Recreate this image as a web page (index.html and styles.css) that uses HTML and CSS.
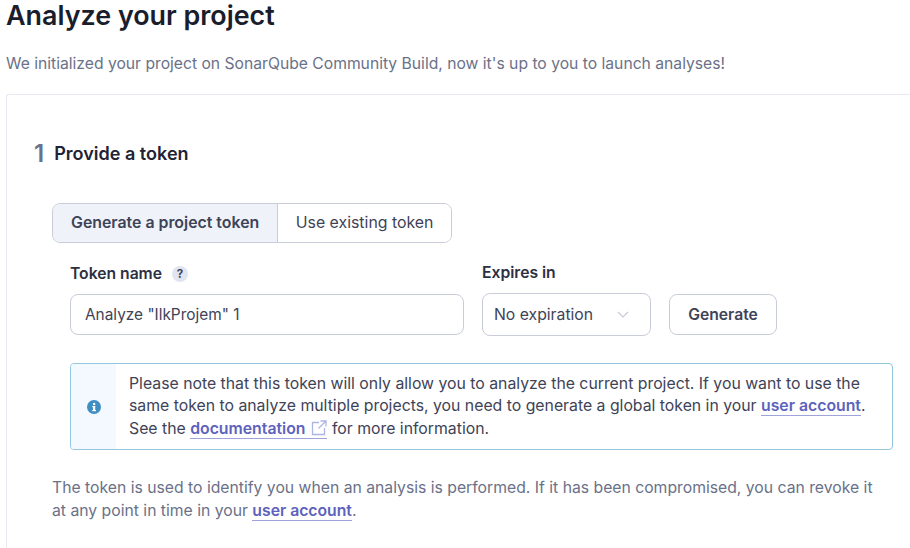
FILE: index.html
```html
<!DOCTYPE html>
<html lang="en">
<head>
<meta charset="utf-8">
<title>Analyze your project</title>
<link rel="stylesheet" href="styles.css">
</head>
<body>
<main class="page">
  <h1 class="title">Analyze your project</h1>
  <p class="intro">We initialized your project on SonarQube Community Build, now it's up to you to launch analyses!</p>
  <section class="card">
    <h2 class="step"><span class="step-num">1</span><span>Provide a token</span></h2>
    <div class="body">
      <div class="toggle">
        <button class="toggle-btn active">Generate a project token</button>
        <button class="toggle-btn">Use existing token</button>
      </div>
      <form class="form">
        <div class="field">
          <label class="label">Token name <span class="help">?</span></label>
          <div class="input">Analyze "IlkProjem" 1</div>
        </div>
        <div class="field">
          <label class="label label-exp">Expires in</label>
          <div class="select">
            <span>No expiration</span>
            <svg class="chev" width="12" height="7" viewBox="0 0 12 7"><path d="M1 1l5 5 5-5" fill="none" stroke="#c5cad6" stroke-width="1.2"/></svg>
          </div>
        </div>
        <button class="generate" type="button">Generate</button>
      </form>
      <div class="note">
        <div class="note-icon">
          <svg width="14" height="14" viewBox="0 0 14 14"><circle cx="7" cy="7" r="7" fill="#3f8fc4"/><rect x="6" y="6" width="2.2" height="5" fill="#fff"/><rect x="5.2" y="6" width="3" height="1.2" fill="#fff"/><rect x="5.2" y="10" width="3.8" height="1.2" fill="#fff"/><circle cx="7.1" cy="3.9" r="1.25" fill="#fff"/></svg>
        </div>
        <p class="note-text">Please note that this token will only allow you to analyze the current project. If you want to use the same token to analyze multiple projects, you need to generate a global token in your <a class="link" href="#">user account</a>. See the <a class="link" href="#">documentation<svg class="ext" width="16" height="16" viewBox="0 0 16 16"><path d="M8 2.500H1.500v12h12V8M9.500 1h5.500v5.500M15 1L7.500 8.500" fill="none" stroke="#aeb5e4" stroke-width="1.300"/></svg></a> for more information.</p>
      </div>
      <p class="foot">The token is used to identify you when an analysis is performed. If it has been compromised, you can revoke it at any point in time in your <a class="link" href="#">user account</a>.</p>
    </div>
  </section>
</main>
</body>
</html>
```
FILE: styles.css
```css
* { box-sizing: border-box; }
html, body { margin: 0; height: 100%; overflow: hidden; background: #fff; }
body { font-family: Inter, "Liberation Sans", sans-serif; color: #3e4357; }
.page { width: 910px; height: 548px; padding-left: 6px; }
.title { margin: 0; font-size: 26.88px; line-height: 30px; font-weight: 600; color: #1a1d2b; }
.intro { margin: 24px 0 0; font-size: 15.68px; line-height: 20px; color: #6a7188; }
.card { margin-top: 20px; width: 904px; height: 454px; border: 1px solid #e8eaf1; border-right: 0; border-bottom: 0; border-radius: 3px 0 0 0; padding: 45px 0 0 27px; }
.step { margin: 0; display: flex; align-items: center; gap: 10px; font-size: 18.05px; line-height: 28px; font-weight: 600; color: #1f2333; }
.step-num { font-size: 24px; color: #6a7188; }
.body { width: 841px; margin: 35px 0 0 18px; }
.toggle { display: inline-flex; height: 40px; border: 1px solid #c9ccd9; border-radius: 8px; overflow: hidden; }
.toggle-btn { font: 400 15.87px Inter, sans-serif; color: #3e4357; background: #fff; border: 0; padding: 0 17.5px 2px 18px; }
.toggle-btn.active { font-weight: 600; background: #eff2f9; border-right: 1px solid #c9ccd9; }
.form { display: flex; align-items: flex-end; margin: 19px 0 0 18px; }
.field { display: flex; flex-direction: column; }
.label { font-size: 15.68px; line-height: 22px; font-weight: 600; color: #2c3042; margin-bottom: 9px; display: flex; align-items: center; gap: 10px; }
.help { width: 16px; height: 16px; border-radius: 50%; background: #e1e5f1; font-size: 11.500px; font-weight: 700; display: flex; align-items: center; justify-content: center; color: #3e4357; }
.input { width: 394px; height: 41px; border: 1px solid #c9ccd9; border-radius: 8px; padding: 0 14px; display: flex; align-items: center; font-size: 15.4px; margin-right: 18px; }
.select { width: 169px; height: 43px; border: 1px solid #c9ccd9; border-radius: 8px; padding: 0 21px 0 11px; display: flex; align-items: center; justify-content: space-between; font-size: 15.75px; margin-bottom: -1px; }
.generate { width: 108px; height: 41px; margin-left: 18px; border: 1px solid #c9ccd9; border-radius: 8px; background: #fff; font: 600 15.68px Inter, sans-serif; color: #3e4357; }
.note { display: flex; margin: 28px 0 0 18px; width: 823px; height: 87px; border: 1px solid #93c7de; border-radius: 4px; overflow: hidden; }
.note-icon { width: 45px; background: #f3f9fe; display: flex; align-items: center; justify-content: center; flex: none; }
.note-text { margin: 0; padding: 9px 14px 0 13px; font-size: 15.8px; line-height: 22.400px; }
.link { color: #5d62bd; font-weight: 600; text-decoration: none; border-bottom: 1px solid #9fa3dc; }
.ext { vertical-align: -2px; margin-left: 6px; }
.foot { margin: 26px 0 0; width: 823px; font-size: 15.74px; line-height: 23px; color: #6a7188; }
```
